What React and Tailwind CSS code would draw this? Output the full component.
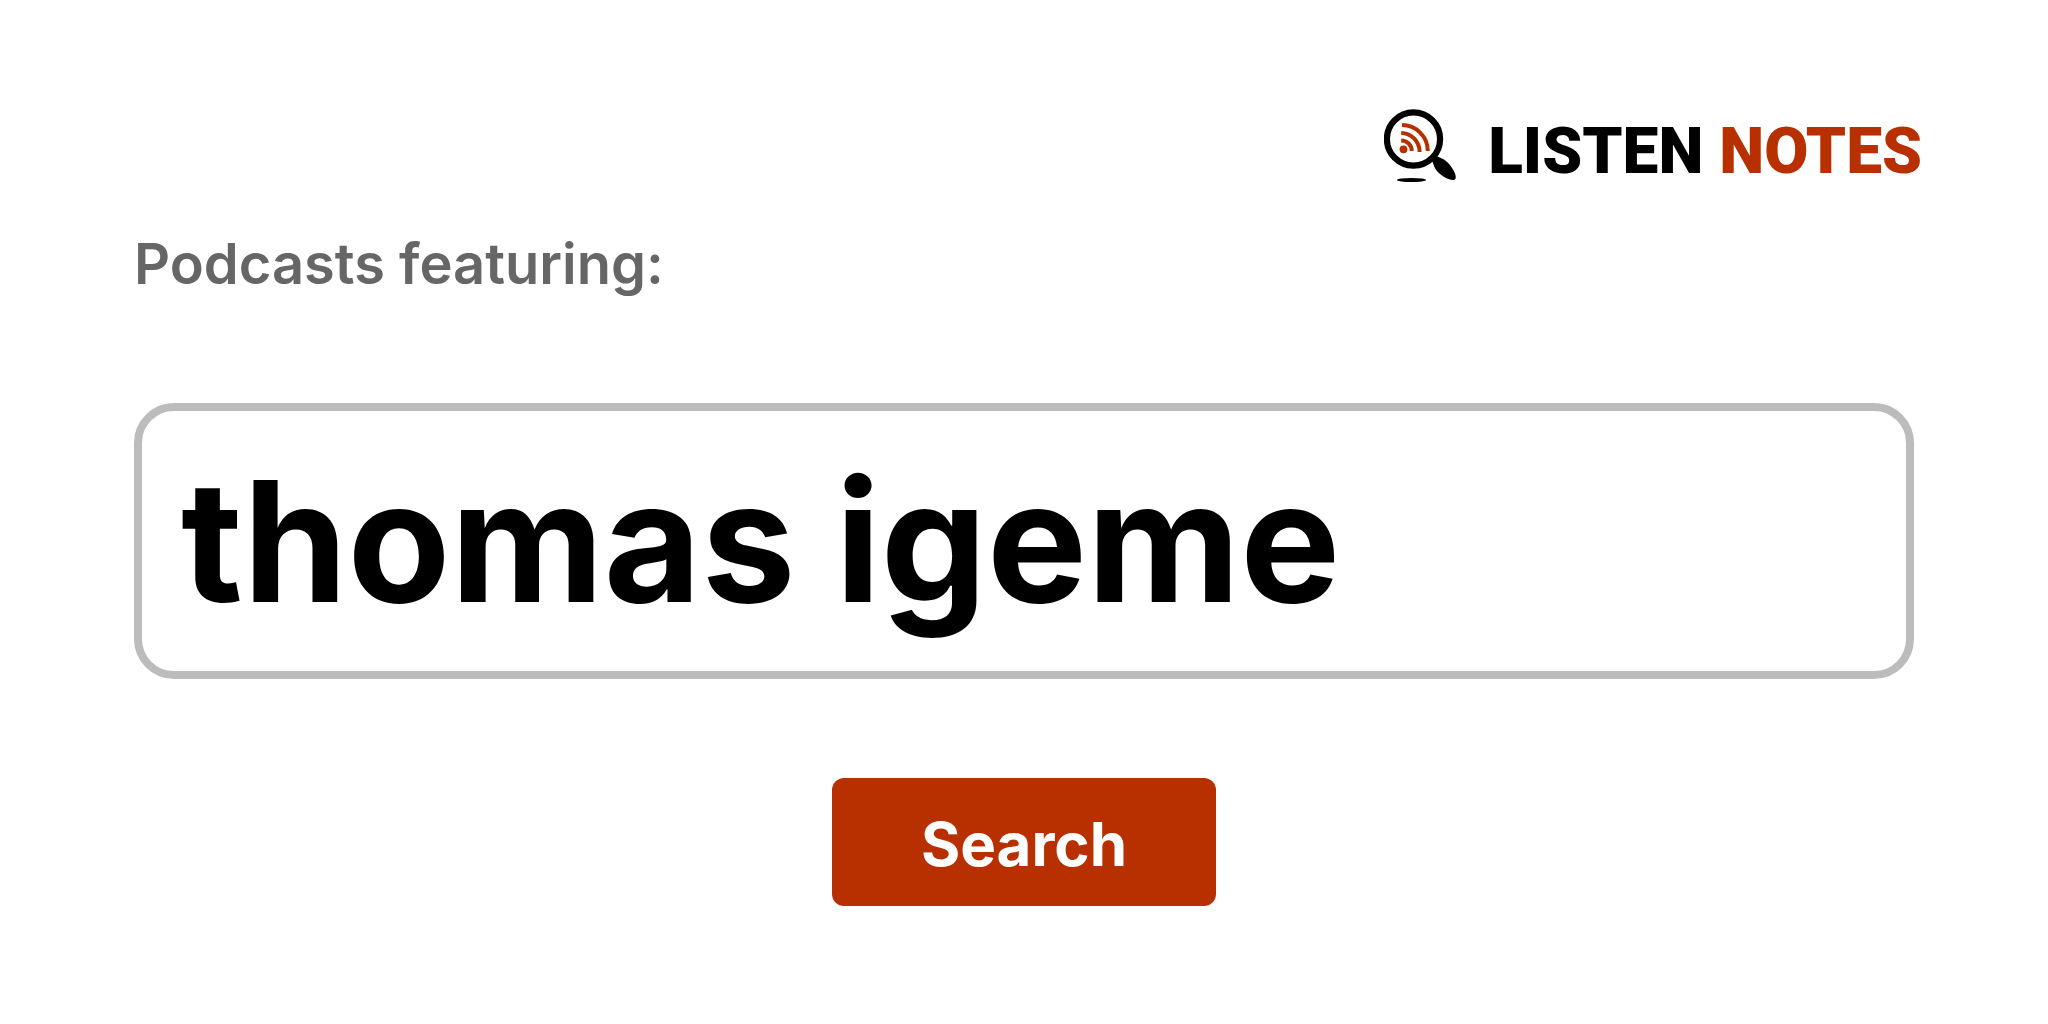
// ============================================================
// Search card: logo, label, search field and button
// ============================================================

function LogoIcon() {
  return (
    <svg className="w-[72px] h-[74px] shrink-0" viewBox="14 13 72 74" aria-hidden="true">
      {/* Lens */}
      <circle cx="43.5" cy="44" r="26.6" fill="none" stroke="#000" strokeWidth="6.2" />
      {/* Handle */}
      <path
        d="M61.5 65.5 L66.5 60.5 C68.5 62.5 71 62.6 74 64.6 C79 68 83.5 74 85.3 79.5 C86.8 84.5 84.5 86 80 84.6 C74 82.5 68.5 78.5 65.5 74 C63.5 71 63.5 67.5 61.5 65.5 Z"
        fill="#000"
      />
      {/* Shadow */}
      <ellipse cx="41.5" cy="85" rx="14.5" ry="2" fill="#000" />
      {/* Feed waves */}
      <circle cx="33.5" cy="54.3" r="3.9" fill="#b93000" />
      <g fill="none" stroke="#b93000" strokeWidth="4">
        <path d="M32 30 C46 30 57.8 41.5 57.8 56" />
        <path d="M31.2 37.9 C41 37.9 49.6 46 49.6 57" />
        <path d="M31.2 45.5 C37 45.5 41.8 50 41.8 56" />
      </g>
    </svg>
  )
}

export default function App() {
  return (
    <main className="bg-white px-[134px] pt-[108px] pb-[118px] font-['Inter',sans-serif]">
      {/* Logo */}
      <header className="flex justify-end">
        <a href="/" className="-mr-2 flex items-start gap-8">
          <LogoIcon />
          <span className="font-['Roboto',sans-serif] text-[64px] leading-[88px] font-black text-black whitespace-nowrap">
            LISTEN <span className="text-[#b93000]">NOTES</span>
          </span>
        </a>
      </header>

      {/* Search form */}
      <form className="flex flex-col" onSubmit={(e) => e.preventDefault()}>
        <label htmlFor="query" className="mt-7 text-[56px] leading-[80px] font-semibold text-[#666]">
          Podcasts featuring:
        </label>
        <input
          id="query"
          type="text"
          defaultValue="thomas igeme"
          className="mt-[99px] h-[276px] w-full rounded-[40px] border-8 border-[#bcbcbc] bg-white px-[39px] text-[168px] font-bold text-black outline-none"
        />
        <button
          type="submit"
          className="mt-[99px] h-32 w-96 self-center rounded-xl bg-[#b93000] pt-1 text-[60px] font-bold text-white"
        >
          Search
        </button>
      </form>
    </main>
  )
}
